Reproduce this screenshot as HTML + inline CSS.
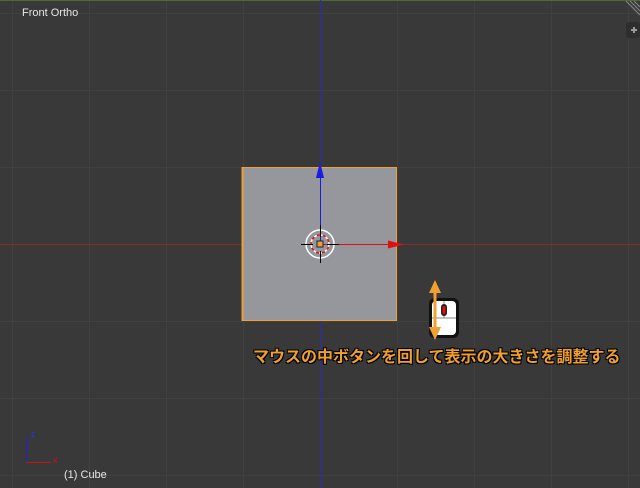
<!DOCTYPE html>
<html><head><meta charset="utf-8"><style>
html,body{margin:0;padding:0;background:#393939;overflow:hidden}
body{width:640px;height:488px;position:relative;font-family:"Liberation Sans",sans-serif}
.t{position:absolute;color:#e6e6e6;font-size:11px}
</style></head><body>
<svg width="640" height="488" style="position:absolute;left:0;top:0">
<g stroke="#414141" stroke-width="1">
<line x1="12.5" y1="0" x2="12.5" y2="488"/><line x1="89.5" y1="0" x2="89.5" y2="488"/><line x1="166.5" y1="0" x2="166.5" y2="488"/><line x1="243.5" y1="0" x2="243.5" y2="488"/>
<line x1="397.5" y1="0" x2="397.5" y2="488"/><line x1="474.5" y1="0" x2="474.5" y2="488"/><line x1="551.5" y1="0" x2="551.5" y2="488"/><line x1="628.5" y1="0" x2="628.5" y2="488"/>
<line x1="0" y1="13.5" x2="640" y2="13.5"/><line x1="0" y1="90.5" x2="640" y2="90.5"/><line x1="0" y1="167.5" x2="640" y2="167.5"/>
<line x1="0" y1="321.5" x2="640" y2="321.5"/><line x1="0" y1="398.5" x2="640" y2="398.5"/><line x1="0" y1="475.5" x2="640" y2="475.5"/>
</g>
<line x1="0" y1="0.5" x2="640" y2="0.5" stroke="#4a6a36" stroke-width="1"/>
<line x1="0" y1="244.5" x2="640" y2="244.5" stroke="#8a2a2a"/>
<line x1="320.5" y1="0" x2="320.5" y2="488" stroke="#2a2ac0"/>
<rect x="242" y="167" width="155" height="154" fill="#96979c"/>
<rect x="242.5" y="167.5" width="154" height="153" fill="none" stroke="#f0a030" stroke-width="1"/>
<line x1="242.5" y1="167" x2="242.5" y2="321" stroke="#f0a030" stroke-width="2"/>
<line x1="320.5" y1="244" x2="320.5" y2="176" stroke="#1a1ae0"/>
<polygon points="320,162 316,178 324,178" fill="#1a1ae0"/>
<line x1="320" y1="244.5" x2="388" y2="244.5" stroke="#e01010" stroke-width="1"/>
<polygon points="404,244.5 388,240.5 388,248.5" fill="#e01010"/>
<circle cx="320" cy="244" r="14" fill="none" stroke="#fff" stroke-width="1.5"/>
<circle cx="320" cy="244" r="9" fill="none" stroke="#fff" stroke-width="1.5" stroke-dasharray="3 3"/>
<circle cx="320" cy="244" r="9" fill="none" stroke="#e01010" stroke-width="1.5" stroke-dasharray="3 3" stroke-dashoffset="3"/>
<g stroke="#000" stroke-width="1"><line x1="301" y1="244.5" x2="313" y2="244.5"/><line x1="327" y1="244.5" x2="339" y2="244.5"/><line x1="320.5" y1="225" x2="320.5" y2="237"/><line x1="320.5" y1="251" x2="320.5" y2="263"/></g>
<rect x="317" y="241" width="6" height="6" fill="#e0a050" stroke="#222"/>
<rect x="429" y="298" width="30" height="40" rx="6" fill="#111"/>
<rect x="432" y="301" width="24" height="34" rx="4" fill="#fff"/>
<line x1="432" y1="318" x2="456" y2="318" stroke="#888"/>
<line x1="444" y1="301" x2="444" y2="318" stroke="#888"/>
<rect x="441" y="304" width="6" height="12" rx="3" fill="#222"/>
<rect x="442.5" y="306" width="3" height="8" rx="1.5" fill="#e01010"/>
<line x1="435" y1="290" x2="435" y2="330" stroke="#f0a030" stroke-width="3"/>
<polygon points="435,280 429,293 441,293" fill="#f0a030"/>
<polygon points="435,340 429,327 441,327" fill="#f0a030"/>
<line x1="26.5" y1="463" x2="26.5" y2="437" stroke="#2020e0"/>
<line x1="26" y1="462.5" x2="51" y2="462.5" stroke="#d01010"/>
<rect x="626" y="22" width="14" height="16" rx="3" fill="#2e2e2e"/>
<path d="M631 30h6M634 27v6" stroke="#999" stroke-width="2"/>
<path d="M630 1l10 10M634 1l6 6M626 1l14 14" stroke="#888" stroke-width="1"/>
</svg>
<div class="t" style="left:22px;top:7px">Front Ortho</div>
<div class="t" style="left:64px;top:469px">(1) Cube</div>
<div style="position:absolute;left:31px;top:429px;color:#3030e0;font-size:9px">z</div>
<div style="position:absolute;left:53px;top:455px;color:#d01010;font-size:9px">x</div>
<div style="position:absolute;left:253px;top:347px;font-size:16px;line-height:22px;font-weight:bold;color:#f0a030;white-space:nowrap;font-family:'Liberation Sans','Noto Sans CJK JP',sans-serif;text-shadow:1px 1px 0 #000,-1px -1px 0 #000,1px -1px 0 #000,-1px 1px 0 #000">マウスの中ボタンを回して表示の大きさを調整する</div>
</body></html>
